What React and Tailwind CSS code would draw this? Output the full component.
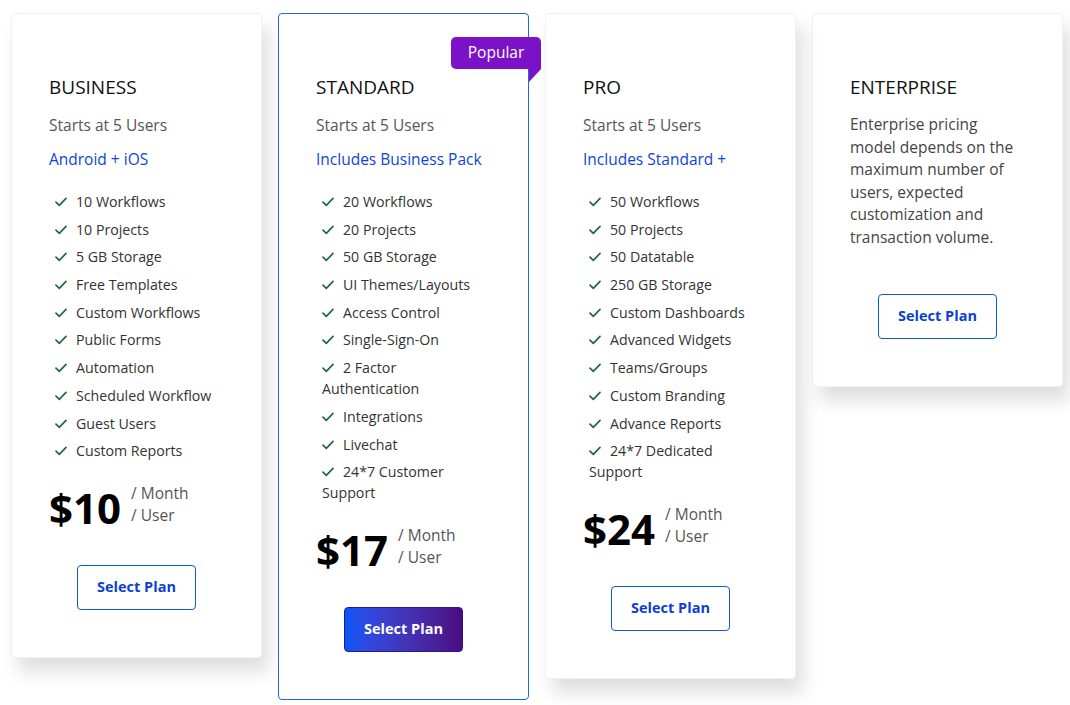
import React from "react";

const plans = [
  {
    name: "BUSINESS",
    sub: "Android + iOS",
    features: ["10 Workflows", "10 Projects", "5 GB Storage", "Free Templates", "Custom Workflows", "Public Forms", "Automation", "Scheduled Workflow", "Guest Users", "Custom Reports"],
    price: "$10",
  },
  {
    name: "STANDARD",
    sub: "Includes Business Pack",
    popular: true,
    features: ["20 Workflows", "20 Projects", "50 GB Storage", "UI Themes/Layouts", "Access Control", "Single-Sign-On", "2 Factor Authentication", "Integrations", "Livechat", "24*7 Customer Support"],
    price: "$17",
  },
  {
    name: "PRO",
    sub: "Includes Standard +",
    features: ["50 Workflows", "50 Projects", "50 Datatable", "250 GB Storage", "Custom Dashboards", "Advanced Widgets", "Teams/Groups", "Custom Branding", "Advance Reports", "24*7 Dedicated Support"],
    price: "$24",
  },
];

function Check() {
  return (
    <svg width="12" height="10" viewBox="0 0 12 10" className="inline-block mr-[9px] align-[0px]" fill="none">
      <path d="M1 5.2 L4.3 8.4 L11 1.4" stroke="#1f6b3c" strokeWidth="1.7" strokeLinecap="round" strokeLinejoin="round" />
    </svg>
  );
}

function Button({ primary }) {
  if (primary) {
    return (
      <button className="w-[119px] h-[45px] rounded-[4px] border border-[#2b1690] bg-gradient-to-r from-[#0456f8] to-[#4b0a80] text-white font-bold text-[14.5px] leading-none">
        Select Plan
      </button>
    );
  }
  return (
    <button className="w-[119px] h-[45px] rounded-[4px] border border-[#0b5bd9] bg-white text-[#0b3fd0] font-bold text-[14.5px] leading-none">
      Select Plan
    </button>
  );
}

function Card({ plan }) {
  return (
    <div
      className={
        "relative w-[251px] shrink-0 rounded-[4px] bg-white pt-[59px] pb-[47px] px-[37px] " +
        (plan.popular
          ? "border border-[#1a6bd8]"
          : "border border-[#f1f1f1] shadow-[7px_14px_18px_rgba(0,0,0,0.13)]")
      }
    >
      {plan.popular && (
        <>
          <div className="absolute top-[23px] right-[-13px] w-[90px] h-[32px] rounded-[5px] rounded-br-none bg-[#7b12c8] text-white text-[15.5px] flex items-center justify-center">
            Popular
          </div>
          <div className="absolute top-[55px] right-[-13px] w-0 h-0 border-t-[13px] border-t-[#7b12c8] border-r-[12px] border-r-transparent" />
        </>
      )}
      <h2 className="text-[19px] leading-[28px] text-[#111]">{plan.name}</h2>
      <p className="mt-[13px] text-[15.5px] leading-[22.5px] text-[#555]">Starts at 5 Users</p>
      <p className="mt-[11px] text-[15.5px] leading-[22.5px] text-[#0f44d6]">{plan.sub}</p>
      <ul className="mt-[21px] ml-[6px] flex flex-col gap-[6.7px]">
        {plan.features.map((f) => (
          <li key={f} className="text-[14.2px] leading-[21px] text-[#333]">
            <Check />
            {f}
          </li>
        ))}
      </ul>
      <div className="mt-[21px] flex items-start">
        <span className="mt-[5px] text-[42px] leading-[42px] font-bold text-black">{plan.price}</span>
        <div className="ml-[10px] flex flex-col text-[15.5px] leading-[22px] text-[#555]">
          <span>/ Month</span>
          <span>/ User</span>
        </div>
      </div>
      <div className="mt-[36px] flex justify-center">
        <Button primary={plan.popular} />
      </div>
    </div>
  );
}

export default function App() {
  return (
    <div
      className="w-[1070px] h-[705px] bg-white overflow-hidden flex items-start gap-[16px] pl-[11px] pt-[13px]"
      style={{ fontFamily: "'Open Sans', 'Noto Sans', sans-serif" }}
    >
      {plans.map((p) => (
        <Card key={p.name} plan={p} />
      ))}
      <div className="w-[251px] shrink-0 rounded-[4px] bg-white border border-[#f1f1f1] shadow-[7px_14px_18px_rgba(0,0,0,0.13)] pt-[59px] pb-[47px] px-[37px]">
        <h2 className="text-[19px] leading-[28px] text-[#111]">ENTERPRISE</h2>
        <p className="mt-[12px] text-[15.5px] leading-[22.6px] text-[#444]">
          Enterprise pricing model depends on the maximum number of users, expected customization and transaction volume.
        </p>
        <div className="mt-[45px] flex justify-center">
          <Button />
        </div>
      </div>
    </div>
  );
}
